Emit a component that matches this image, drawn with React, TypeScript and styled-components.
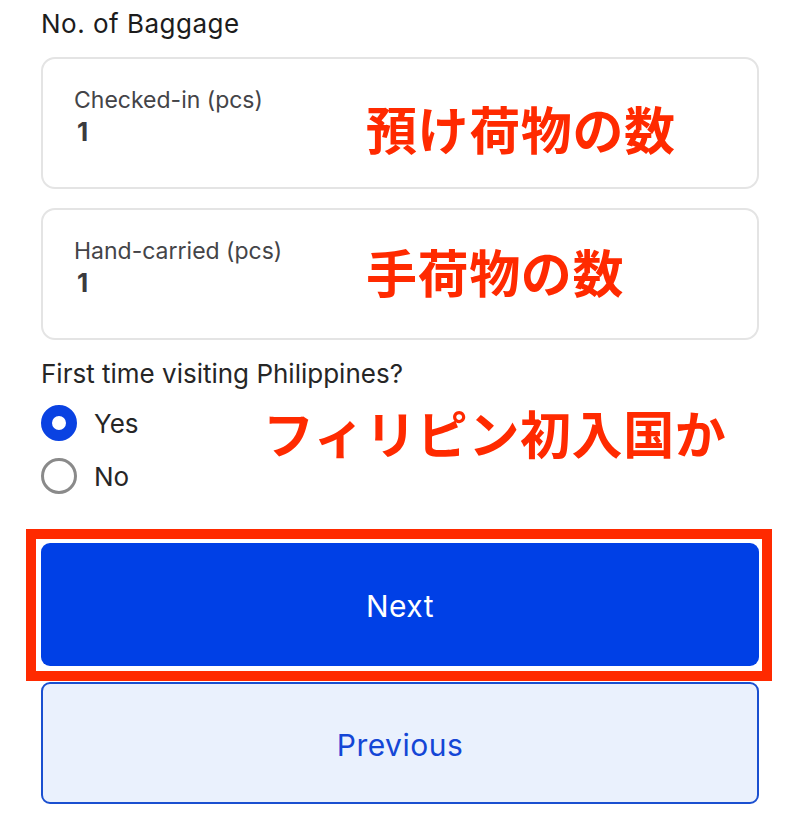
import React from "react";
import styled, { createGlobalStyle } from "styled-components";

const GlobalStyle = createGlobalStyle`
  html, body { margin: 0; padding: 0; background: #ffffff; }
  body { font-family: "Inter", "Noto Sans", sans-serif; color: #1f1f1f; }
  * { box-sizing: border-box; }
`;

const Page = styled.div`
  width: 800px;
  height: 826px;
  padding: 8px 41px 0 41px;
  display: flex;
  flex-direction: column;
  position: relative;
  overflow: hidden;
`;

const SectionTitle = styled.div`
  font-size: 26px;
  line-height: 32px;
  letter-spacing: 0.5px;
  color: #1c1c1c;
  margin-bottom: 17px;
`;

const Card = styled.div<{ $gap?: number }>`
  position: relative;
  height: 132px;
  border: 2px solid #e4e4e4;
  border-radius: 14px;
  padding: 27px 31px 0;
  display: flex;
  flex-direction: column;
  margin-bottom: ${(p) => p.$gap ?? 0}px;
`;

const FieldLabel = styled.div`
  font-size: 23px;
  line-height: 28px;
  color: #444448;
`;

const FieldValue = styled.div`
  font-size: 26px;
  line-height: 36px;
  font-weight: 700;
  color: #3a3a3e;
  padding-left: 3px;
`;

const Annotation = styled.div<{ $left: number; $top: number }>`
  position: absolute;
  left: ${(p) => p.$left}px;
  top: ${(p) => p.$top}px;
  font-family: "Noto Sans CJK JP", sans-serif;
  font-weight: 700;
  font-size: 51px;
  letter-spacing: 0.6px;
  line-height: 1;
  color: #ff2a00;
  white-space: nowrap;
`;

const Question = styled.div`
  font-size: 26px;
  line-height: 30px;
  color: #262626;
  margin-top: 19px;
`;

const RadioGroup = styled.div`
  position: relative;
  display: flex;
  flex-direction: column;
  gap: 17px;
  margin-top: 16px;
`;

const RadioRow = styled.label`
  display: flex;
  align-items: center;
  gap: 17px;
  height: 36px;
  font-size: 26px;
  color: #262626;
`;

const RadioDot = styled.span<{ $checked?: boolean }>`
  width: 36px;
  height: 36px;
  border-radius: 50%;
  flex: none;
  ${(p) =>
    p.$checked
      ? `background: #ffffff; border: 11px solid #0a42e2;`
      : `background: #ffffff; border: 3px solid #8a8a8a;`}
`;

const Highlight = styled.div`
  margin: 35px -13px 0 -15px;
  border: 10px solid #ff2a00;
  padding: 4px 3px 5px 5px;
`;

const PrimaryButton = styled.button`
  width: 100%;
  height: 123px;
  border: none;
  border-radius: 9px;
  background: #0040e6;
  color: #ffffff;
  font-family: inherit;
  font-size: 30px;
  letter-spacing: 0.5px;
  display: flex;
  align-items: center;
  justify-content: center;
  padding: 3px 0 0;
`;

const SecondaryButton = styled.button`
  width: 100%;
  height: 122px;
  margin-top: 1px;
  border: 2px solid #1a4fd0;
  border-radius: 9px;
  background: #eaf1fd;
  color: #1446d6;
  font-family: inherit;
  font-size: 30px;
  letter-spacing: 0.5px;
  display: flex;
  align-items: center;
  justify-content: center;
  padding: 3px 0 0;
`;

export default function App() {
  return (
    <>
      <GlobalStyle />
      <Page>
        <SectionTitle>No. of Baggage</SectionTitle>
        <Card $gap={19}>
          <FieldLabel>Checked-in (pcs)</FieldLabel>
          <FieldValue>1</FieldValue>
          <Annotation $left={323} $top={44}>預け荷物の数</Annotation>
        </Card>
        <Card>
          <FieldLabel>Hand-carried (pcs)</FieldLabel>
          <FieldValue>1</FieldValue>
          <Annotation $left={323} $top={36}>手荷物の数</Annotation>
        </Card>
        <Question>First time visiting Philippines?</Question>
        <RadioGroup>
          <RadioRow>
            <RadioDot $checked />
            Yes
          </RadioRow>
          <RadioRow>
            <RadioDot />
            No
          </RadioRow>
          <Annotation $left={222} $top={2}>フィリピン初入国か</Annotation>
        </RadioGroup>
        <Highlight>
          <PrimaryButton>Next</PrimaryButton>
        </Highlight>
        <SecondaryButton>Previous</SecondaryButton>
      </Page>
    </>
  );
}
